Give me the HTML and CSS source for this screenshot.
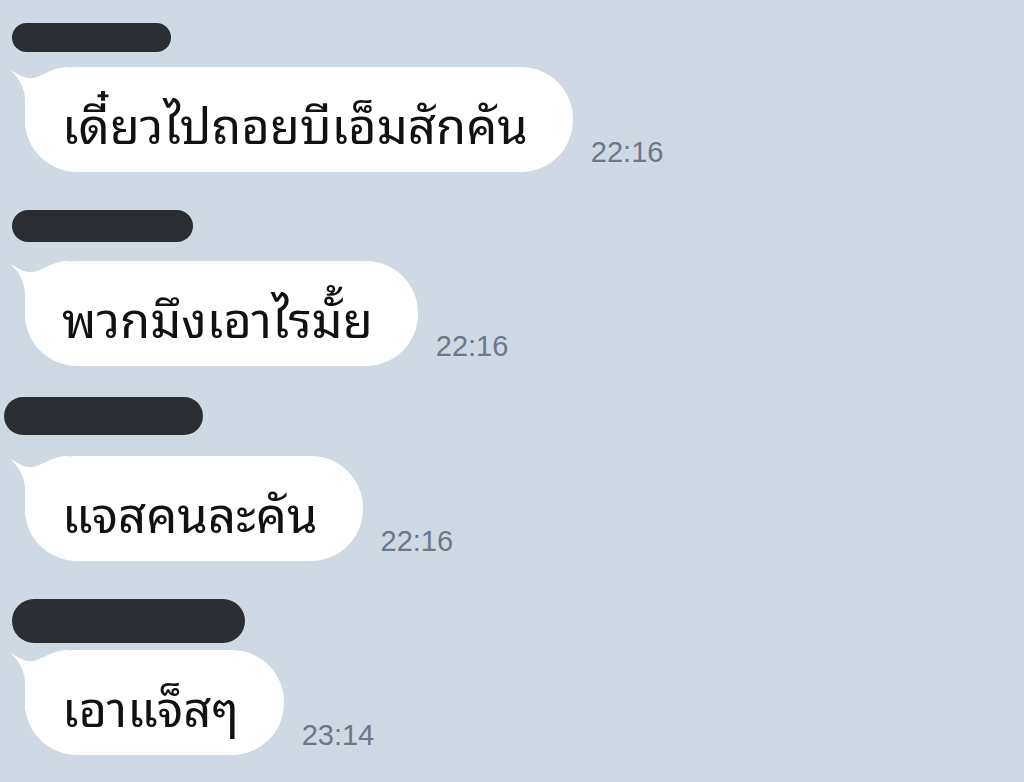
FILE: index.html
```html
<!DOCTYPE html>
<html lang="th">
<head>
<meta charset="utf-8">
<title>Chat</title>
<link rel="stylesheet" href="styles.css">
</head>
<body>
<main class="chat">
  <section class="msg msg-1">
    <div class="name-bar bar-1"></div>
    <div class="row">
      <div class="bubble">
        <svg class="tail" viewBox="0 0 60 60" width="60" height="60" aria-hidden="true"><path d="M0 2 C10 8 16 12 24 11 C32 10 40 2 56 0 L60 0 L60 60 L16 60 L16 33 C16 20 8 8 0 2 Z" fill="#fff"/></svg>
        <span class="text">เดี๋ยวไปถอยบีเอ็มสักคัน</span>
      </div>
      <span class="time">22:16</span>
    </div>
  </section>
  <section class="msg msg-2">
    <div class="name-bar bar-2"></div>
    <div class="row">
      <div class="bubble">
        <svg class="tail" viewBox="0 0 60 60" width="60" height="60" aria-hidden="true"><path d="M0 2 C10 8 16 12 24 11 C32 10 40 2 56 0 L60 0 L60 60 L16 60 L16 33 C16 20 8 8 0 2 Z" fill="#fff"/></svg>
        <span class="text">พวกมึงเอาไรมั้ย</span>
      </div>
      <span class="time">22:16</span>
    </div>
  </section>
  <section class="msg msg-3">
    <div class="name-bar bar-3"></div>
    <div class="row">
      <div class="bubble">
        <svg class="tail" viewBox="0 0 60 60" width="60" height="60" aria-hidden="true"><path d="M0 2 C10 8 16 12 24 11 C32 10 40 2 56 0 L60 0 L60 60 L16 60 L16 33 C16 20 8 8 0 2 Z" fill="#fff"/></svg>
        <span class="text">แจสคนละคัน</span>
      </div>
      <span class="time">22:16</span>
    </div>
  </section>
  <section class="msg msg-4">
    <div class="name-bar bar-4"></div>
    <div class="row">
      <div class="bubble">
        <svg class="tail" viewBox="0 0 60 60" width="60" height="60" aria-hidden="true"><path d="M0 2 C10 8 16 12 24 11 C32 10 40 2 56 0 L60 0 L60 60 L16 60 L16 33 C16 20 8 8 0 2 Z" fill="#fff"/></svg>
        <span class="text">เอาแจ็สๆ</span>
      </div>
      <span class="time">23:14</span>
    </div>
  </section>
</main>
</body>
</html>
```
FILE: styles.css
```css
html, body {
  margin: 0;
  padding: 0;
}
body {
  background: #cfd9e4;
  width: 1024px;
  height: 782px;
  overflow: hidden;
  font-family: "Noto Sans Thai Looped", "Loma", "Garuda", "Waree", "Norasi", "Noto Sans Thai", sans-serif;
}
.chat {
  display: flex;
  flex-direction: column;
  padding-top: 23px;
}
.msg {
  display: flex;
  flex-direction: column;
  align-items: flex-start;
}
.name-bar {
  background: #2a2e33;
  border-radius: 999px;
}
.bar-1 { width: 159px; height: 29px; margin-left: 12px; margin-bottom: 15px; }
.bar-2 { width: 181px; height: 32px; margin-left: 12px; margin-bottom: 19px; }
.bar-3 { width: 199px; height: 38px; margin-left: 4px; margin-bottom: 21px; }
.bar-4 { width: 233px; height: 44px; margin-left: 12px; margin-bottom: 7px; }
.msg-2 { margin-top: 38px; }
.msg-3 { margin-top: 31px; }
.msg-4 { margin-top: 38px; }
.row {
  display: flex;
  align-items: flex-end;
  gap: 18px;
  margin-left: 25px;
}
.bubble {
  position: relative;
  background: #fff;
  border-radius: 52px;
  height: 105px;
  box-sizing: border-box;
  padding: 4px 45px 0 37px;
  display: flex;
  align-items: center;
}
.tail {
  position: absolute;
  left: -16px;
  top: 0;
}
.text {
  position: relative;
  font-size: 49px;
  color: #111;
  white-space: nowrap;
}
.time {
  font-family: "Liberation Sans", Arial, sans-serif;
  font-size: 29px;
  color: #6b7888;
  margin-bottom: 3px;
}
```
